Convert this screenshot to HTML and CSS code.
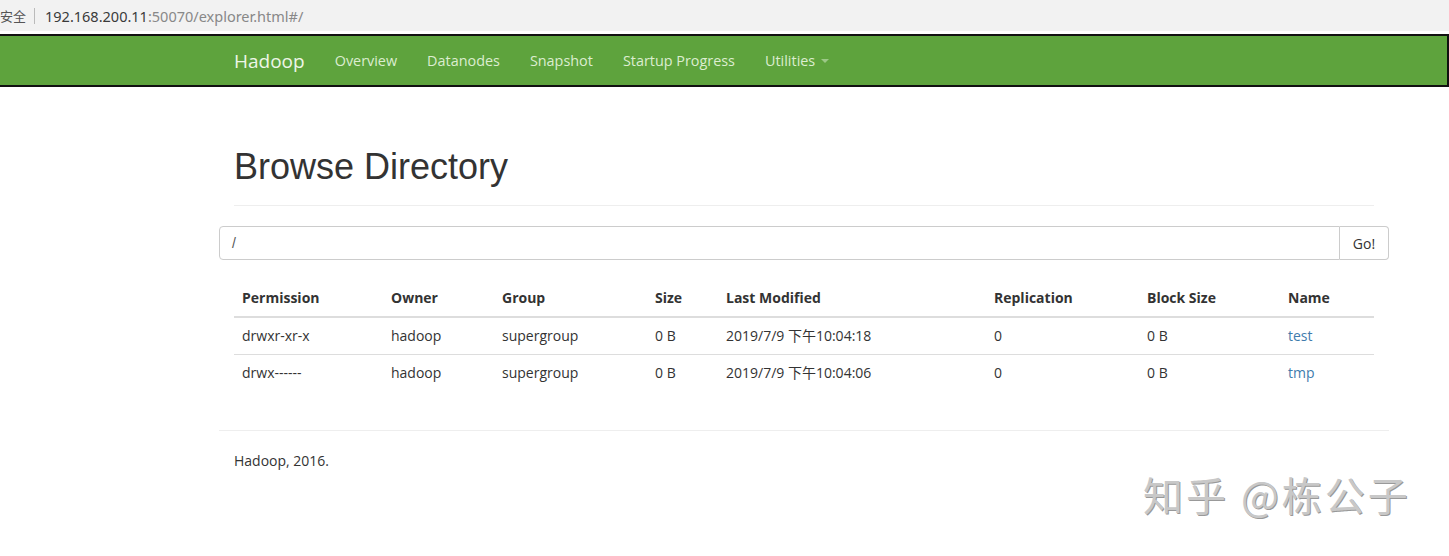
FILE: index.html
```html
<!DOCTYPE html>
<html>
<head>
<meta charset="utf-8">
<link rel="stylesheet" href="styles.css">
</head>
<body>
<div class="addrbar">
  <span class="secure">安全</span><span class="sep"></span><span class="host">192.168.200.11</span><span class="rest">:50070/explorer.html#/</span>
</div>
<div class="navbar">
  <div class="container nav-inner">
    <span class="brand">Hadoop</span>
    <span class="nav-link">Overview</span>
    <span class="nav-link">Datanodes</span>
    <span class="nav-link">Snapshot</span>
    <span class="nav-link">Startup Progress</span>
    <span class="nav-link">Utilities <span class="caret"></span></span>
  </div>
</div>
<div class="container main">
  <div class="page-header"><h1>Browse Directory</h1></div>
  <div class="input-group">
    <div class="input">/</div>
    <div class="btn">Go!</div>
  </div>
  <div class="table-wrap">
    <table class="table">
      <colgroup>
        <col style="width:149px"><col style="width:111px"><col style="width:153px"><col style="width:71px">
        <col style="width:268px"><col style="width:153px"><col style="width:141px"><col style="width:94px">
      </colgroup>
      <thead>
        <tr><th>Permission</th><th>Owner</th><th>Group</th><th>Size</th><th>Last Modified</th><th>Replication</th><th>Block Size</th><th>Name</th></tr>
      </thead>
      <tbody>
        <tr><td>drwxr-xr-x</td><td>hadoop</td><td>supergroup</td><td>0 B</td><td>2019/7/9 下午10:04:18</td><td>0</td><td>0 B</td><td><span class="link">test</span></td></tr>
        <tr><td>drwx------</td><td>hadoop</td><td>supergroup</td><td>0 B</td><td>2019/7/9 下午10:04:06</td><td>0</td><td>0 B</td><td><span class="link">tmp</span></td></tr>
      </tbody>
    </table>
  </div>
  <div class="footer">
    <p>Hadoop, 2016.</p>
    <div class="watermark">知乎 @栋公子</div>
  </div>
</div>
</body>
</html>
```
FILE: styles.css
```css
* { box-sizing: border-box; }
html, body { margin: 0; padding: 0; background: #fff; }
body {
  font-family: "Open Sans", "Noto Sans", "Noto Sans CJK SC", sans-serif;
  font-size: 14px;
  color: #333;
  width: 1449px;
  height: 556px;
  overflow: hidden;
}
.addrbar {
  height: 34px;
  background: #f2f2f2;
  display: flex;
  align-items: center;
  font-family: "Noto Sans", "Noto Sans CJK SC", sans-serif;
  font-size: 14.5px;
  border-bottom: 3px solid #fff;
}
.secure { color: #555; font-size: 13px; }
.sep { width: 1px; height: 16px; background: #bbb; margin: 0 10px 0 8px; }
.host { color: #3a3a3a; font-weight: 400; }
.rest { color: #888; }
.container { width: 1170px; margin-left: 219px; padding: 0 15px; }
.navbar {
  background: #5ea33d;
  height: 53px;
  border-top: 2px solid #111;
  border-bottom: 2px solid #111;
  border-right: 2px solid #111;
}
.nav-inner { display: flex; align-items: center; height: 49px; }
.brand { color: #eef6e8; font-size: 19px; margin-right: 15px; }
.nav-link { color: #dcedd0; font-size: 14.4px; padding: 0 15px; display: flex; align-items: center; }
.caret {
  display: inline-block; width: 0; height: 0; margin-left: 6px;
  border-left: 4px solid transparent; border-right: 4px solid transparent;
  border-top: 4px solid #9cc887;
}
.main { padding: 0; }
.page-header {
  margin: 60px 15px 20px;
  padding-bottom: 18px;
  border-bottom: 1px solid #eee;
}
.page-header h1 {
  margin: 0;
  font-family: "Liberation Sans", Arial, sans-serif;
  font-weight: 400;
  font-size: 36px;
  line-height: 40px;
  color: #333;
}
.input-group { display: flex; height: 34px; }
.input {
  flex: 1;
  border: 1px solid #ccc;
  border-radius: 4px 0 0 4px;
  padding: 6px 12px;
  line-height: 20px;
  color: #555;
  font-family: "Liberation Sans", Arial, sans-serif;
}
.btn {
  width: 49px;
  border: 1px solid #ccc;
  border-left: none;
  border-radius: 0 4px 4px 0;
  display: flex; align-items: center; justify-content: center;
  color: #333;
  background: #fff;
}
.table-wrap { padding: 0 15px; margin-top: 20px; }
.table { border-collapse: collapse; width: 1140px; table-layout: fixed; }
.table th, .table td { text-align: left; padding: 8px; line-height: 20px; height: 37px; }
.table th { font-weight: 700; border-bottom: 2px solid #ddd; }
.table td { border-top: 1px solid #ddd; }
.table tbody tr:first-child td { border-top: none; }
.link { color: #3f7cad; }
.footer { margin-top: 38px; border-top: 1px solid #eee; padding: 20px 15px; position: relative; }
.footer p { margin: 0; line-height: 20px; }
.watermark {
  position: absolute;
  left: 924px; top: 34px;
  font-family: "Noto Sans CJK SC", sans-serif;
  font-size: 40px;
  color: #c8c8c8;
  text-shadow: 1px 1px 0 #999;
  letter-spacing: 3px;
  white-space: nowrap;
}
```
